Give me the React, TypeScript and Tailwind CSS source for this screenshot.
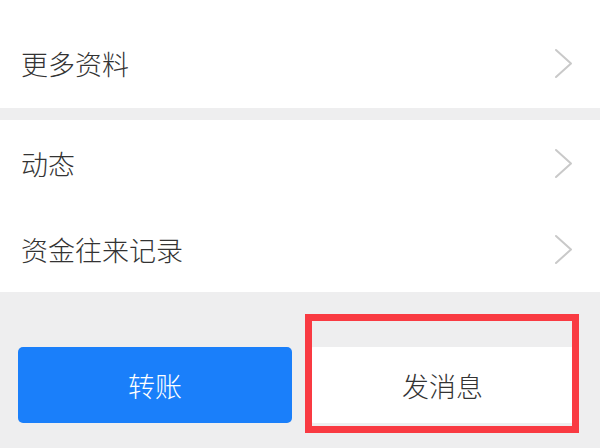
import React from "react";

const font = { fontFamily: '"Noto Sans CJK SC", "Noto Sans", sans-serif' };

function Chevron() {
  return (
    <svg width="19" height="31" viewBox="0 0 19 31" fill="none">
      <polyline points="2,2 17,15.5 2,29" stroke="#c9c9c9" strokeWidth="2" strokeLinecap="round" strokeLinejoin="round" />
    </svg>
  );
}

function Row({ label }: { label: string }) {
  return (
    <div className="h-[86px] flex items-center justify-between pl-[21px] pr-[27px]">
      <span className="text-[27px] leading-none font-light text-[#333333]">{label}</span>
      <Chevron />
    </div>
  );
}

export default function App() {
  return (
    <div className="w-[600px] h-[448px] bg-[#eeeeef] flex flex-col overflow-hidden" style={font}>
      <div className="bg-white h-[108px] flex flex-col justify-end">
        <div className="h-[88px] flex items-center justify-between pl-[21px] pr-[27px] pb-[2px]">
          <span className="text-[27px] leading-none font-light text-[#333333]">更多资料</span>
          <Chevron />
        </div>
      </div>
      <div className="h-[12px]" />
      <div className="bg-white h-[172px] flex flex-col">
        <Row label="动态" />
        <Row label="资金往来记录" />
      </div>
      <div className="flex pl-[18px] pt-[55px] gap-[17px]">
        <div className="w-[274px] h-[76px] rounded-[5px] bg-[#1a7ffa] flex items-center justify-center">
          <span className="text-[27px] leading-none font-light text-white">转账</span>
        </div>
        <div className="relative w-[267px] h-[76px] rounded-[5px] bg-white flex items-center justify-center">
          <span className="text-[27px] leading-none font-light text-[#333333]">发消息</span>
          <div className="absolute left-[-4px] top-[-33px] w-[274px] h-[119px] border-[7px] border-[#f93a42]" />
        </div>
      </div>
    </div>
  );
}
